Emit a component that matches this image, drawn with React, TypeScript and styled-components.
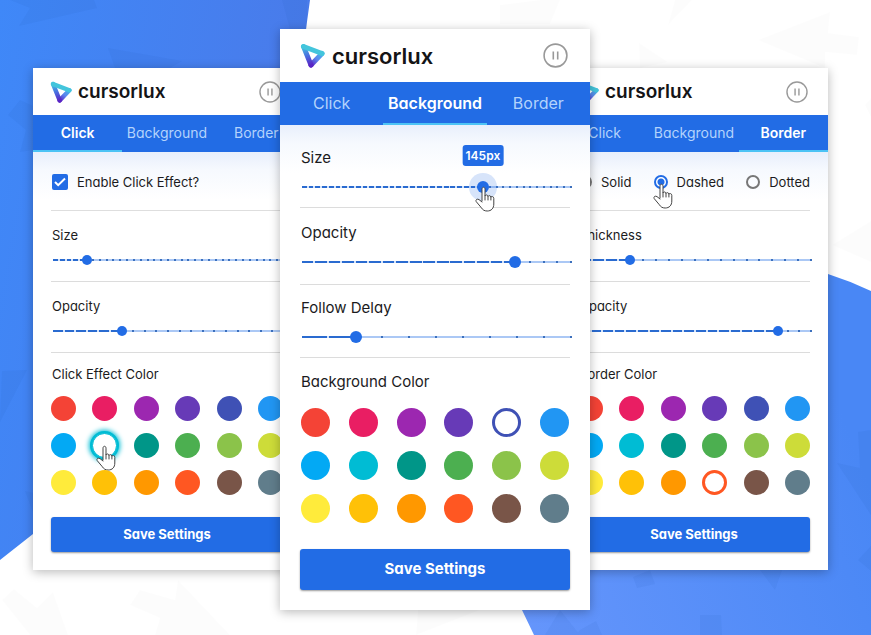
import React from 'react';
import styled, { createGlobalStyle, css } from 'styled-components';

const BLUE = '#226ce5';

const GlobalStyle = createGlobalStyle`
  * { box-sizing: border-box; }
  body {
    margin: 0;
    background: #fff;
    color: #1b1b1d;
    font-family: Inter, "Open Sans", sans-serif;
    font-feature-settings: "cv11" 1;
  }
  button, input { font: inherit; font-feature-settings: inherit; margin: 0; }
`;

type Size = { $large?: boolean };

const Stage = styled.main`
  position: relative;
  min-height: 100vh;
  display: flex;
  align-items: flex-start;
  padding: 29px 43px 25px 33px;
  overflow: hidden;
`;

const Backdrop = styled.svg`
  position: absolute;
  inset: 0;
  width: 100%;
  height: 100%;
`;

const Panel = styled.form<Size>`
  position: relative;
  z-index: ${p => (p.$large ? 2 : 1)};
  flex: ${p => (p.$large ? 310 : 268)} 1 0;
  min-width: 0;
  margin: ${p => (p.$large ? '0 -30px 0 -21px' : '39px 0 0')};
  background: #fff;
  box-shadow: 0 2px 10px rgba(0, 0, 0, 0.28);
`;

const Header = styled.header<Size>`
  display: flex;
  align-items: center;
  justify-content: space-between;
  height: ${p => (p.$large ? 53 : 47)}px;
  padding: 0 ${p => (p.$large ? 22 : 20)}px 0 ${p => (p.$large ? 20 : 17)}px;
`;

const Brand = styled.div<Size>`
  display: flex;
  align-items: center;
  gap: ${p => (p.$large ? 7 : 6)}px;
  font-size: ${p => (p.$large ? 22 : 19)}px;
  line-height: 24px;
  font-weight: 600;
  color: #141416;
  svg { width: ${p => (p.$large ? 25 : 22)}px; height: ${p => (p.$large ? 25 : 22)}px; }
`;

const PauseButton = styled.button<Size>`
  width: ${p => (p.$large ? 25 : 22)}px;
  height: ${p => (p.$large ? 25 : 22)}px;
  padding: 0;
  border: 0;
  background: none;
  svg { display: block; width: 100%; height: 100%; }
`;

const Tabs = styled.nav<Size>`
  display: grid;
  grid-template-columns: repeat(3, 1fr);
  height: ${p => (p.$large ? 43 : 37)}px;
  background: ${BLUE};
`;

const Tab = styled.button<Size & { $active: boolean }>`
  padding: 0;
  border: 0;
  border-bottom: 2px solid ${p => (p.$active ? '#4cc3f5' : 'transparent')};
  background: none;
  font-size: ${p => (p.$large ? 16 : 14)}px;
  line-height: 20px;
  font-weight: ${p => (p.$active ? 600 : 400)};
  color: ${p => (p.$active ? '#fff' : '#b3d3fc')};
  white-space: nowrap;
`;

const Body = styled.div<Size>`
  padding: ${p => (p.$large ? '0 20px 20px' : '0 18px 18px')};
  background: linear-gradient(#e8effc 0, #f6f9fe 18px, #fff 48px);
`;

const OptionRow = styled.div`
  display: flex;
  align-items: center;
  justify-content: space-between;
  height: 59px;
  padding-top: 2px;
  border-bottom: 1px solid #dedede;
`;

const Option = styled.label`
  position: relative;
  display: flex;
  align-items: center;
  gap: 9px;
  font-size: 13px;
  line-height: 16px;
`;

const Checkbox = styled.input`
  appearance: none;
  width: 16px;
  height: 16px;
  margin-left: 1px;
  border-radius: 2px;
  background: ${BLUE};
`;

const CheckMark = styled.svg`
  position: absolute;
  left: 3px;
  top: 2px;
  width: 12px;
  height: 12px;
  pointer-events: none;
`;

const Radio = styled.input`
  appearance: none;
  width: 14px;
  height: 14px;
  border: 2px solid #777;
  border-radius: 50%;
  &:checked {
    border-color: ${BLUE};
    background: radial-gradient(circle, ${BLUE} 0 3px, #fff 4px);
  }
`;

const Setting = styled.div<{ $height: number; $bottom: number }>`
  display: flex;
  flex-direction: column;
  justify-content: flex-end;
  height: ${p => p.$height}px;
  padding-bottom: ${p => p.$bottom}px;
  border-bottom: 1px solid #dcdcdc;
`;

const textLabel = css<Size>`
  font-size: ${p => (p.$large ? 15 : 13)}px;
  line-height: ${p => (p.$large ? 20 : 16)}px;
  font-weight: 400;
`;

const SettingLabel = styled.label<Size>`
  ${textLabel}
  margin: 0 0 ${p => (p.$large ? 12 : 10)}px 1px;
`;

const SliderBox = styled.div`
  position: relative;
  display: grid;
  align-items: center;
  height: 14px;
  margin: 0 -2px 0 2px;
  > * { grid-area: 1 / 1; }
`;

const TrackDots = styled.div<{ $steps: number }>`
  height: 2px;
  background: repeating-linear-gradient(
    90deg,
    #abc8f5 0 calc(100% / ${p => p.$steps} - 2px),
    #3c70bd calc(100% / ${p => p.$steps} - 2px) calc(100% / ${p => p.$steps})
  );
`;

const TrackFill = styled.div<{ $steps: number; $value: number }>`
  height: 2px;
  clip-path: inset(0 ${p => 100 - p.$value}% 0 0);
  background: repeating-linear-gradient(
    90deg,
    #2a6bd0 0 calc(100% / ${p => p.$steps} - 2px),
    #d3e3fa calc(100% / ${p => p.$steps} - 2px) calc(100% / ${p => p.$steps})
  );
`;

const Range = styled.input<Size & { $halo?: boolean }>`
  appearance: none;
  position: relative;
  width: calc(100% + 12px);
  height: 14px;
  margin: 0 -6px;
  background: none;
  &::-webkit-slider-thumb {
    appearance: none;
    width: ${p => (p.$large ? 12 : 10)}px;
    height: ${p => (p.$large ? 12 : 10)}px;
    border-radius: 50%;
    background: ${BLUE};
    box-shadow: ${p => (p.$halo ? '0 0 0 8px rgba(34, 108, 229, 0.18)' : 'none')};
  }
`;

const Bubble = styled.output<{ $value: number }>`
  position: absolute;
  left: ${p => p.$value}%;
  bottom: 28px;
  transform: translateX(-50%);
  padding: 0 3px;
  border-radius: 3px;
  background: ${BLUE};
  color: #fff;
  font-size: 12px;
  line-height: 21px;
  font-weight: 600;
`;

const HandIcon = styled.svg`
  position: absolute;
  width: 20px;
  height: 26px;
  pointer-events: none;
`;

const SliderHand = styled(HandIcon)<{ $value: number }>`
  left: calc(${p => p.$value}% - 8px);
  top: 6px;
`;

const RadioHand = styled(HandIcon)`
  left: -1px;
  top: 9px;
`;

const SwatchHand = styled(HandIcon)`
  left: 4px;
  top: 12px;
`;

const ColorGroup = styled.fieldset`
  min-width: 0;
  margin: 0;
  padding: 0;
  border: 0;
`;

const GroupLabel = styled.legend<Size>`
  ${textLabel}
  padding: ${p => (p.$large ? '14px 0 16px 1px' : '13px 0 14px 1px')};
`;

const SwatchGrid = styled.div<Size>`
  display: grid;
  grid-template-columns: repeat(6, ${p => (p.$large ? 29 : 25)}px);
  justify-content: space-between;
  row-gap: ${p => (p.$large ? 14 : 12)}px;
  padding: ${p => (p.$large ? '0 1px' : '0')};
  margin-bottom: ${p => (p.$large ? 26 : 22)}px;
`;

const SwatchCell = styled.span`
  position: relative;
  display: block;
`;

const Swatch = styled.input<Size & { $color: string; $glow?: boolean }>`
  appearance: none;
  display: block;
  width: ${p => (p.$large ? 29 : 25)}px;
  height: ${p => (p.$large ? 29 : 25)}px;
  border-radius: 50%;
  background: ${p => p.$color};
  &:checked {
    background: #fff;
    border: 3px solid ${p => p.$color};
    ${p => p.$glow && css`
      outline: 2px solid ${p.$color};
      outline-offset: 0;
      border-width: 1px;
      box-shadow: 0 0 5px 3px ${p.$color};
    `}
  }
`;

const SaveButton = styled.button<Size>`
  display: block;
  width: 100%;
  height: ${p => (p.$large ? 41 : 35)}px;
  padding: 0 0 2px;
  border: 0;
  border-radius: 3px;
  background: ${BLUE};
  box-shadow: 0 1px 2px rgba(0, 0, 0, 0.4);
  color: #fff;
  font-size: ${p => (p.$large ? 15 : 13)}px;
  line-height: 20px;
  font-weight: 700;
`;

const COLORS: [string, string][] = [
  ['Red', '#f44336'], ['Pink', '#e91e63'], ['Purple', '#9c27b0'],
  ['Deep purple', '#673ab7'], ['Indigo', '#3f51b5'], ['Blue', '#2196f3'],
  ['Light blue', '#03a9f4'], ['Cyan', '#00bcd4'], ['Teal', '#009688'],
  ['Green', '#4caf50'], ['Light green', '#8bc34a'], ['Lime', '#cddc39'],
  ['Yellow', '#ffeb3b'], ['Amber', '#ffc107'], ['Orange', '#ff9800'],
  ['Deep orange', '#ff5722'], ['Brown', '#795548'], ['Blue grey', '#607d8b'],
];

function Logo({ id }: { id: string }) {
  return (
    <svg viewBox="0 0 25 25" fill="none" strokeWidth="5" strokeLinecap="round" strokeLinejoin="round" aria-hidden="true">
      <defs>
        <linearGradient id={`${id}-left`} x1="4" y1="3" x2="11" y2="22" gradientUnits="userSpaceOnUse">
          <stop stopColor="#43c6df" />
          <stop offset=".5" stopColor="#496fe0" />
          <stop offset="1" stopColor="#5924c4" />
        </linearGradient>
        <linearGradient id={`${id}-right`} x1="22" y1="10" x2="11" y2="22" gradientUnits="userSpaceOnUse">
          <stop stopColor="#43b6e8" />
          <stop offset=".5" stopColor="#5c85ee" />
          <stop offset="1" stopColor="#5a22c6" />
        </linearGradient>
      </defs>
      <path d="M22 10.5 11 22" stroke={`url(#${id}-right)`} />
      <path d="M3.5 3.5 11 22" stroke={`url(#${id}-left)`} />
      <path d="M3.5 3.5 22 10.5" stroke="#43c5dc" />
    </svg>
  );
}

function HandShape() {
  return (
    <path
      d="M7 15V3.2C7 .6 10 .6 10 3.2V10c.3-1.5 2.8-1.4 3 .4.5-1.2 2.7-1 2.9.7.8-1 2.9-.6 2.9 1.2V18c0 4.4-2.5 7-6.6 7-2.8 0-4.4-1-5.8-3.2L1.2 15.6C.2 13.6 2.3 12.5 4 13.6L7 16M10 10v4M13 10.5V14M15.9 11v3"
      fill="#fff"
      stroke="#444"
      strokeWidth="1"
      strokeLinejoin="round"
      strokeLinecap="round"
    />
  );
}

type SliderProps = {
  id: string; label: string; value: number; steps: number;
  height: number; bottom: number; large?: boolean; bubble?: string;
};

function Slider({ id, label, value, steps, height, bottom, large, bubble }: SliderProps) {
  return (
    <Setting $height={height} $bottom={bottom}>
      <SettingLabel $large={large} htmlFor={id}>{label}</SettingLabel>
      <SliderBox>
        <TrackDots $steps={steps} />
        <TrackFill $steps={steps} $value={value} />
        <Range id={id} type="range" min={0} max={100} step="any" defaultValue={value} $large={large} $halo={!!bubble} />
        {bubble && <Bubble htmlFor={id} $value={value}>{bubble}</Bubble>}
        {bubble && <SliderHand $value={value} viewBox="0 0 20 26"><HandShape /></SliderHand>}
      </SliderBox>
    </Setting>
  );
}

function ColorPicker({ name, label, selected, large, hover }: {
  name: string; label: string; selected: string; large?: boolean; hover?: boolean;
}) {
  return (
    <ColorGroup>
      <GroupLabel $large={large}>{label}</GroupLabel>
      <SwatchGrid $large={large}>
        {COLORS.map(([title, color]) => (
          <SwatchCell key={title}>
            <Swatch
              type="radio" name={name} aria-label={title} $color={color}
              defaultChecked={title === selected} $large={large} $glow={hover}
            />
            {hover && title === selected && <SwatchHand viewBox="0 0 20 26"><HandShape /></SwatchHand>}
          </SwatchCell>
        ))}
      </SwatchGrid>
    </ColorGroup>
  );
}

function SettingsPanel({ id, active, large, children }: {
  id: string; active: string; large?: boolean; children: React.ReactNode;
}) {
  return (
    <Panel $large={large} onSubmit={e => e.preventDefault()}>
      <Header $large={large}>
        <Brand $large={large}><Logo id={id} />cursorlux</Brand>
        <PauseButton $large={large} type="button" aria-label="Pause">
          <svg viewBox="0 0 25 25" fill="none" stroke="#999">
            <circle cx="12.5" cy="12.5" r="11.4" strokeWidth="1.6" />
            <path d="M10.3 8.5v8M14.7 8.5v8" strokeWidth="1.6" />
          </svg>
        </PauseButton>
      </Header>
      <Tabs $large={large}>
        {['Click', 'Background', 'Border'].map(t => (
          <Tab key={t} type="button" $large={large} $active={t === active}>{t}</Tab>
        ))}
      </Tabs>
      <Body $large={large}>
        {children}
        <SaveButton $large={large} type="submit">Save Settings</SaveButton>
      </Body>
    </Panel>
  );
}

function Background() {
  return (
    <Backdrop viewBox="0 0 871 635" preserveAspectRatio="none" aria-hidden="true">
      <defs>
        <linearGradient id="bg-left" x1="0" y1="0" x2="1" y2="0.3">
          <stop stopColor="#3f88f8" />
          <stop offset="1" stopColor="#4a7ae9" />
        </linearGradient>
        <linearGradient id="bg-right" x1="0" y1="1" x2="1" y2="0.6">
          <stop stopColor="#6696fc" />
          <stop offset="1" stopColor="#4987f5" />
        </linearGradient>
      </defs>
      <path d="M0 0H310L306 29C294 220 150 440 33 534L0 560Z" fill="url(#bg-left)" />
      <path d="M871 291Q850 281 828 274C660 220 460 440 522 610L534 635H871Z" fill="url(#bg-right)" />
      <g fill="#1b4fa8" fillOpacity="0.07">
        <path d="M10 0H94L97 8 19 26 30 8ZM108 48 182 61 170 68H115ZM8 115 20 100 33 106V150L20 152 26 130ZM2 371 27 370 0 422ZM25 491 33 493V512ZM282 0H307V29H290Z" />
        <path d="M837 463 860 468 858 432 871 430V515ZM858 560 871 546V571ZM633 577 650 570 655 584 637 588ZM760 570H782L775 590ZM700 615H721L722 635H700ZM580 630 596 621 602 635H576ZM545 635 560 610 580 635Z" />
      </g>
      <g fill="#000" fillOpacity="0.012">
        <path d="M675 0H692L668 25ZM758 40 830 12 828 33 859 37 857 55 825 52 825 68ZM639 43 668 62 640 68ZM832 245 871 221V262ZM865 105 871 98V117ZM2 600 14 589 37 608 53 592 68 635H30ZM130 605 140 590 175 600 178 580 230 635H155L160 618ZM418 610H480L416 635ZM500 5 540 0H560L550 24H500Z" />
      </g>
    </Backdrop>
  );
}

export default function App() {
  return (
    <>
      <GlobalStyle />
      <Stage>
        <Background />
        <SettingsPanel id="click" active="Click">
          <OptionRow>
            <Option>
              <Checkbox type="checkbox" defaultChecked />
              <CheckMark viewBox="0 0 12 12"><path d="m1 6 3.2 3.2L11 2.5" fill="none" stroke="#fff" strokeWidth="2" /></CheckMark>
              Enable Click Effect?
            </Option>
          </OptionRow>
          <Slider id="click-size" label="Size" value={15} steps={34} height={71} bottom={14} />
          <Slider id="click-opacity" label="Opacity" value={30} steps={20} height={71} bottom={14} />
          <ColorPicker name="click-color" label="Click Effect Color" selected="Cyan" hover />
        </SettingsPanel>
        <SettingsPanel id="background" active="Background" large>
          <Slider id="bg-size" label="Size" value={67} steps={40} height={83} bottom={13} bubble="145px" large />
          <Slider id="bg-opacity" label="Opacity" value={79} steps={20} height={77} bottom={15} large />
          <Slider id="bg-delay" label="Follow Delay" value={20} steps={10} height={73} bottom={13} large />
          <ColorPicker name="bg-color" label="Background Color" selected="Indigo" large />
        </SettingsPanel>
        <SettingsPanel id="border" active="Border">
          <OptionRow>
            <Option><Radio type="radio" name="style" />Solid</Option>
            <Option>
              <Radio type="radio" name="style" defaultChecked />Dashed
              <RadioHand viewBox="0 0 20 26"><HandShape /></RadioHand>
            </Option>
            <Option><Radio type="radio" name="style" />Dotted</Option>
          </OptionRow>
          <Slider id="border-thickness" label="Thickness" value={22} steps={18} height={71} bottom={14} />
          <Slider id="border-opacity" label="Opacity" value={85} steps={20} height={71} bottom={14} />
          <ColorPicker name="border-color" label="Border Color" selected="Deep orange" />
        </SettingsPanel>
      </Stage>
    </>
  );
}
